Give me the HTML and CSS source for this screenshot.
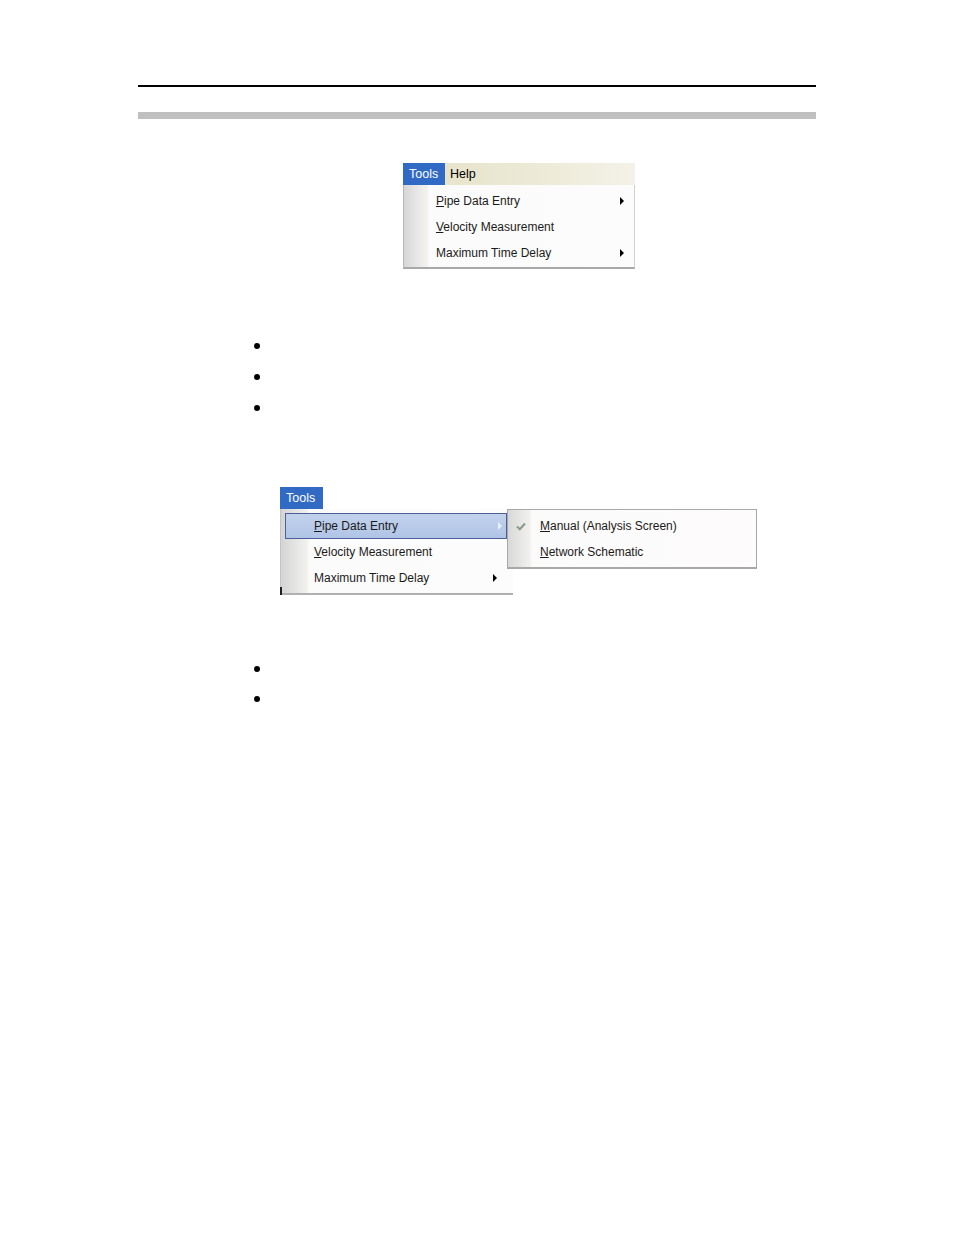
FILE: index.html
```html
<!DOCTYPE html>
<html>
<head>
<meta charset="utf-8">
<link rel="stylesheet" href="styles.css">
</head>
<body>
<div class="page">
  <div class="rule-top"></div>
  <div class="rule-gray"></div>

  <div class="fig1">
    <div class="menubar">
      <span class="tab tab-active">Tools</span>
      <span class="tab">Help</span>
    </div>
    <div class="dropdown dd1">
      <div class="item"><span class="label"><u>P</u>ipe Data Entry</span><span class="arrow"></span></div>
      <div class="item"><span class="label"><u>V</u>elocity Measurement</span></div>
      <div class="item"><span class="label">Maximum Time Delay</span><span class="arrow"></span></div>
    </div>
  </div>

  <div class="bullets b1">
    <div class="dot"></div>
    <div class="dot"></div>
    <div class="dot"></div>
  </div>

  <div class="fig2">
    <div class="menubar2">
      <span class="tab tab-active">Tools</span>
    </div>
    <div class="dropdown dd2">
      <div class="item item-hl"><span class="label"><u>P</u>ipe Data Entry</span><span class="arrow arrow-light"></span></div>
      <div class="item"><span class="label"><u>V</u>elocity Measurement</span></div>
      <div class="item"><span class="label">Maximum Time Delay</span><span class="arrow"></span></div>
    </div>
    <div class="submenu">
      <div class="sitem"><span class="check"><svg width="10" height="9" viewBox="0 0 10 9"><path d="M1 4.5 L3.8 7.2 L9 1.5" fill="none" stroke="#8a9a8a" stroke-width="2"/></svg></span><span class="label"><u>M</u>anual (Analysis Screen)</span></div>
      <div class="sitem"><span class="check"></span><span class="label"><u>N</u>etwork Schematic</span></div>
    </div>
  </div>

  <div class="bullets b2">
    <div class="dot"></div>
    <div class="dot"></div>
  </div>
</div>
</body>
</html>
```

FILE: styles.css
```css
html, body {
  margin: 0;
  padding: 0;
  background: #ffffff;
}

.page {
  width: 954px;
  height: 1235px;
  font-family: "Liberation Sans", Arial, sans-serif;
}

.rule-top {
  margin: 0 0 0 138px;
  padding-top: 85px;
  width: 678px;
  height: 2px;
  background: #000;
  background-clip: content-box;
  box-sizing: content-box;
}

.rule-gray {
  margin: 25px 0 0 138px;
  width: 678px;
  height: 7px;
  background: #c0c0c0;
}

/* ---------- Figure 1 ---------- */
.fig1 {
  margin: 44px 0 0 403px;
  width: 232px;
}

.menubar {
  height: 22px;
  display: flex;
  align-items: stretch;
  background: linear-gradient(to right, #e6e2c8 0%, #ebe8d4 50%, #f4f2e8 100%);
}

.tab {
  display: flex;
  align-items: center;
  font-size: 12.5px;
  color: #000;
  padding: 0 5px;
}

.tab-active {
  background: #316ac5;
  color: #fff;
  padding: 0 7px 0 6px;
  width: 29px;
}

.dropdown {
  position: relative;
  background: linear-gradient(to right, #d6d6d6 0px, #e8e8e6 14px, #f4f3f0 24px, #fcfbfb 25px, #fdfcfc 100%);
  box-sizing: border-box;
}

.dd1 {
  height: 84px;
  padding-top: 3px;
  border-left: 1px solid #b8b8b8;
  border-right: 1px solid #cfcfcf;
  border-bottom: 2px solid #a8a8a8;
}

.item {
  height: 26px;
  display: flex;
  align-items: center;
  position: relative;
  font-size: 12px;
  color: #1a1a1a;
}

.item .label {
  margin-left: 32px;
}

.arrow {
  position: absolute;
  right: 10px;
  top: 9px;
  width: 0;
  height: 0;
  border-top: 4px solid transparent;
  border-bottom: 4px solid transparent;
  border-left: 4px solid #000;
}

.arrow-light {
  border-left-color: #e8f0fa;
}

u {
  text-decoration: underline;
  text-underline-offset: 1px;
}

/* ---------- bullets ---------- */
.bullets {
  margin-left: 254px;
  display: flex;
  flex-direction: column;
}

.b1 {
  margin-top: 74px;
  gap: 25px;
}

.b2 {
  margin-top: 71px;
  gap: 24px;
}

.dot {
  width: 6px;
  height: 6px;
  border-radius: 50%;
  background: #000;
}

/* ---------- Figure 2 ---------- */
.fig2 {
  margin: 76px 0 0 280px;
  width: 233px;
  position: relative;
}

.menubar2 {
  height: 22px;
  display: flex;
  align-items: stretch;
}

.menubar2 .tab-active {
  width: 30px;
}

.dd2 {
  height: 86px;
  padding: 4px 6px 0 5px;
  border-left: 1px solid #c4c4c4;
  border-bottom: 2px solid #b0b0b0;
  background: linear-gradient(to right, #d4d4d4 0px, #e6e6e4 16px, #f2f1ee 26px, #fcfbfb 28px, #fdfcfc 100%);
}

.dd2::after {
  content: "";
  position: absolute;
  left: -1px;
  bottom: -2px;
  width: 2px;
  height: 8px;
  background: #202020;
}

.dd2 .item .label {
  margin-left: 28px;
}

.dd2 .arrow {
  right: 10px;
}

.item-hl {
  box-sizing: border-box;
  height: 26px;
  margin-left: -1px;
  border: 1px solid #4b5f9c;
  background: linear-gradient(to bottom, #c2d2ec 0%, #b0c4e6 100%);
}

.item-hl .label {
  margin-left: 28px !important;
}

.item-hl .arrow {
  right: 4px;
  top: 8px;
}

.submenu {
  position: absolute;
  left: 227px;
  top: 22px;
  width: 250px;
  height: 60px;
  box-sizing: border-box;
  padding-top: 3px;
  border: 1px solid #a8a8a8;
  border-bottom-width: 2px;
  background: linear-gradient(to right, #d8d8d8 0px, #e8e8e6 14px, #f2f1ee 22px, #fcfbfb 24px, #fdfbfb 100%);
}

.sitem {
  height: 26px;
  display: flex;
  align-items: center;
  font-size: 12px;
  color: #1a1a1a;
}

.check {
  width: 26px;
  display: flex;
  justify-content: center;
}

.sitem .label {
  margin-left: 6px;
}
```
